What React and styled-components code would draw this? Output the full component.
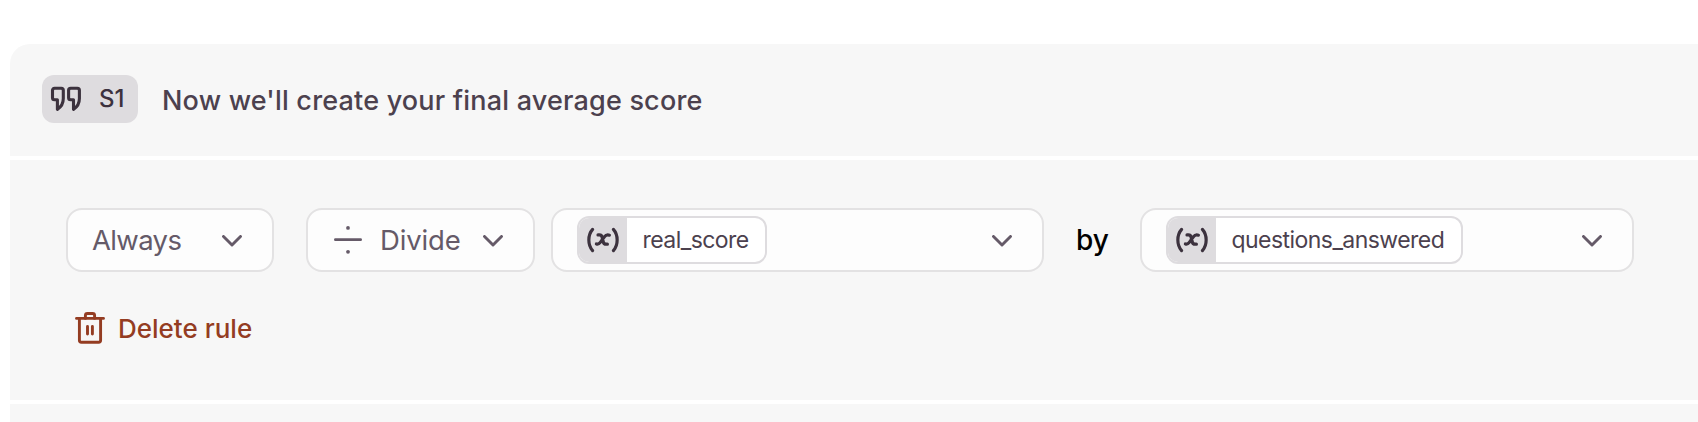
import React from "react";
import styled, { createGlobalStyle } from "styled-components";

const App = () => {
  return (
    <Page>
      <GlobalStyle />
      <Card>
        <Header>
          <Badge>
            <QuoteIcon />
            <BadgeLabel>S1</BadgeLabel>
          </Badge>
          <Title>Now we'll create your final average score</Title>
        </Header>

        <Rule>
          <Fields>
            <Select $width={208} $gap={32}>
              <SelectLabel $spacing={-0.65}>Always</SelectLabel>
              <Chevron />
            </Select>
            <Select $width={229} $gap={16}>
              <DivideIcon />
              <SelectLabel $spacing={-0.15}>Divide</SelectLabel>
              <Chevron />
            </Select>
            <Select $width={493} $gap={32}>
              <Variable name="real_score" width={190} />
              <Chevron />
            </Select>
            <By>by</By>
            <Select $width={494} $gap={0}>
              <Variable name="questions_answered" width={297} />
              <Chevron />
            </Select>
          </Fields>
          <DeleteButton type="button">
            <TrashIcon />
            <DeleteLabel>Delete rule</DeleteLabel>
          </DeleteButton>
        </Rule>

        <NextRule />
      </Card>
    </Page>
  );
};

export default App;

//CHIP WITH THE (x) ICON AND THE VARIABLE NAME
const Variable = ({ name, width }) => (
  <Chip $width={width}>
    <ChipIcon>
      <VariableIcon />
    </ChipIcon>
    <ChipLabel>{name}</ChipLabel>
  </Chip>
);

const Chevron = () => (
  <ChevronSvg width="20" height="12" viewBox="0 0 20 12">
    <path d="M1.5 1.5 L10 10 L18.5 1.5" />
  </ChevronSvg>
);

const QuoteIcon = () => (
  <Icon width="32" height="26" viewBox="0 0 32 26" strokeWidth="3.1">
    <path d="M4.5 2.3h6.8a2 2 0 0 1 2 2v8.3c0 5-2 8.4-5.9 10.7v-9.6H4.5a2 2 0 0 1-2-2V4.3a2 2 0 0 1 2-2z" />
    <path d="M20.6 2.3h6.8a2 2 0 0 1 2 2v8.3c0 5-2 8.4-5.9 10.7v-9.6h-2.9a2 2 0 0 1-2-2V4.3a2 2 0 0 1 2-2z" />
  </Icon>
);

const DivideIcon = () => (
  <DivideSvg width="28" height="28" viewBox="0 0 28 28">
    <path d="M1.4 13.7H26.6" />
    <circle cx="14" cy="1.9" r="1.9" />
    <circle cx="14" cy="25.8" r="1.9" />
  </DivideSvg>
);

const VariableIcon = () => (
  <Icon width="34" height="26" viewBox="0 0 34 26" strokeWidth="3.2">
    <path d="M6.6 2.4C1.6 8 1.6 18 6.6 23.6M27.4 2.4C32.4 8 32.4 18 27.4 23.6" />
    <path d="M12 7.9h1.4c1.6 0 2.3.6 2.7 2.2l1.2 4.9c.4 1.6 1.1 2.2 2.7 2.2h1.4M23.4 8.2c-2.2-.8-3.5-.3-5 1.6l-4.1 5.6c-1.2 1.6-2.2 2.1-3.9 1.6" />
  </Icon>
);

const TrashIcon = () => (
  <Icon width="30" height="34" viewBox="0 0 30 34" strokeWidth="2.9">
    <path d="M1.5 7.4H28.5M4.4 7.4V29.2a2 2 0 0 0 2 2H23.6a2 2 0 0 0 2-2V7.4" />
    <path d="M10.4 7.4V4.5a2 2 0 0 1 2-2h5.2a2 2 0 0 1 2 2V7.4M12.5 15.5V23M17.4 15.5V23" />
  </Icon>
);

const GlobalStyle = createGlobalStyle`
  * {
    box-sizing: border-box;
  }
  body {
    margin: 0;
    background: #ffffff;
    font-family: Inter, "Liberation Sans", sans-serif;
    overflow: hidden;
  }
`

const Page = styled.div`
  height: 422px;
  padding: 44px 0 0 10px;
  overflow: hidden;
`

const Card = styled.div`
  display: flex;
  flex-direction: column;
  gap: 4px;
  border-radius: 20px 0 0 0;
  overflow: hidden;
`

const Header = styled.div`
  display: flex;
  align-items: flex-start;
  height: 112px;
  padding: 31px 32px;
  background: #f7f7f7;
`

const Badge = styled.div`
  display: flex;
  align-items: center;
  width: 96px;
  height: 48px;
  padding-left: 8px;
  border-radius: 12px;
  background: #dedcdf;
  color: #3c323e;
`

const BadgeLabel = styled.span`
  margin-left: 17px;
  font-size: 24px;
  font-weight: 450;
  line-height: 48px;
`

const Title = styled.span`
  margin-left: 24px;
  color: #4c414e;
  font-size: 27px;
  font-weight: 500;
  letter-spacing: 0.19px;
  line-height: 52px;
  white-space: nowrap;
`

const Rule = styled.div`
  height: 240px;
  padding: 48px 56px;
  background: #f7f7f7;
`

const NextRule = styled.div`
  height: 18px;
  background: #f7f7f7;
`

const Fields = styled.div`
  display: flex;
  align-items: center;
`

const Select = styled.div`
  display: flex;
  flex-shrink: 0;
  align-items: center;
  width: ${(props) => props.$width}px;
  height: 64px;
  margin-right: ${(props) => props.$gap}px;
  padding-left: 24px;
  border: 2px solid #e3e2e3;
  border-radius: 16px;
  background: #fdfdfd;
`

const SelectLabel = styled.span`
  color: #655a68;
  font-size: 27.5px;
  line-height: 60px;
  letter-spacing: ${(props) => props.$spacing}px;
`

const ChevronSvg = styled.svg`
  margin: 2px 30px 0 auto;
  fill: none;
  stroke: #655a68;
  stroke-width: 2.9;
  stroke-linecap: round;
  stroke-linejoin: round;
`

const DivideSvg = styled.svg`
  margin: 0 18px 0 2px;
  fill: #655a68;
  path {
    stroke: #655a68;
    stroke-width: 2.8;
    stroke-linecap: round;
  }
`

const Icon = styled.svg`
  flex-shrink: 0;
  fill: none;
  stroke: currentColor;
  stroke-linecap: round;
  stroke-linejoin: round;
`

const Chip = styled.div`
  display: flex;
  width: ${(props) => props.$width}px;
  height: 48px;
  border: 2px solid #dedcdf;
  border-radius: 12px;
  background: #ffffff;
  overflow: hidden;
`

const ChipIcon = styled.div`
  display: flex;
  flex-shrink: 0;
  align-items: center;
  justify-content: center;
  width: 48px;
  background: #dedcdf;
  color: #3c323e;
`

const ChipLabel = styled.span`
  margin-left: 15.5px;
  color: #4c414e;
  font-size: 23px;
  letter-spacing: -0.55px;
  line-height: 44px;
`

const By = styled.span`
  width: 64px;
  color: #000000;
  font-size: 28px;
  font-weight: 500;
`

const DeleteButton = styled.button`
  display: flex;
  align-items: center;
  margin-top: 38px;
  padding: 0 9px;
  border: 0;
  background: none;
  color: #943c22;
  font-family: inherit;
`

const DeleteLabel = styled.span`
  margin-left: 13px;
  padding-top: 2px;
  font-size: 26px;
  font-weight: 500;
  line-height: 34px;
`
